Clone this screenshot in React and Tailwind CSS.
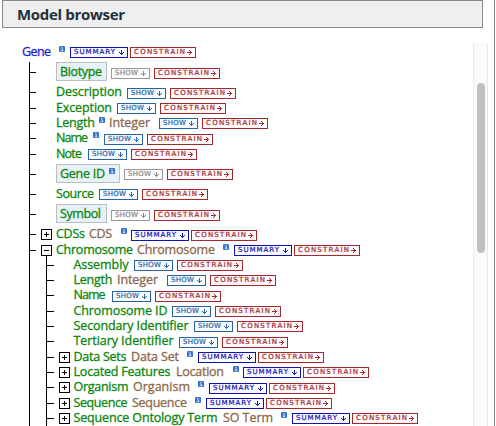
import React, { useLayoutEffect, useRef } from "react";

// Label whose tracking is adjusted so that it fills the given width.
function Fit({ w, className, children }) {
  const ref = useRef(null);
  useLayoutEffect(() => {
    const el = ref.current;
    el.style.letterSpacing = "0px";
    const natural = el.getBoundingClientRect().width;
    el.style.letterSpacing = (w - natural) / Math.max(1, children.length - 1) + "px";
  }, [w, children]);
  return (
    <span className={"block shrink-0 " + className} style={{ width: w }}>
      <span ref={ref} className="inline-block whitespace-pre">{children}</span>
    </span>
  );
}

function Arrow({ down }) {
  return (
    <svg width="5" height="5" viewBox="0 0 5 5" shapeRendering="crispEdges" fill="currentColor" className="shrink-0">
      {down ? (
        <path d="M2 0h1v5h-1zM0 2h1v1h-1zM1 3h1v1h-1zM3 3h1v1h-1zM4 2h1v1h-1z" />
      ) : (
        <path d="M0 2h5v1h-5zM2 0h1v1h-1zM3 1h1v1h-1zM3 3h1v1h-1zM2 4h1v1h-1z" />
      )}
    </svg>
  );
}

const pixel = "h-[9px] leading-[9px] text-[7px] font-['DejaVu_Sans'] -mt-[2px] [-webkit-text-stroke:0.2px]";
const kinds = {
  show: { box: "w-[39px] border-[#2864a4] text-[#2864a4] bg-[#f9fdff]", text: "SHOW", w: 23 },
  off: { box: "w-[39px] border-[#999] text-[#888] bg-[#fdfdfd]", text: "SHOW", w: 23 },
  summary: { box: "w-[58px] border-[#1212b4] text-[#1212b4] bg-[#fafbff]", text: "SUMMARY", w: 41 },
  constrain: { box: "w-[66px] border-[#9c2a2f] text-[#9c2a2f] bg-[#fff9f9]", text: "CONSTRAIN", w: 51 },
};

function Button({ kind, ml }) {
  const k = kinds[kind];
  return (
    <button
      className={"mt-[6px] flex h-[11px] shrink-0 items-start justify-between border pt-[2px] pr-[3px] pl-[3px] " + k.box}
      style={{ marginLeft: ml }}
    >
      <Fit w={k.w} className={pixel}>{k.text}</Fit>
      <Arrow down={kind !== "constrain"} />
    </button>
  );
}

function Info({ ml }) {
  return (
    <svg width="6" height="6" viewBox="0 0 6 6" className="mt-[5px] shrink-0" style={{ marginLeft: ml }}>
      <rect width="6" height="6" rx="1" fill="#3873cb" />
      <path d="M2.2 1.4h1.4M2 2.9h1.5v2M1.8 4.8h2.6" stroke="#e4efff" strokeWidth="0.8" fill="none" />
    </svg>
  );
}

function Toggle({ open }) {
  return (
    <svg width="11" height="11" viewBox="0 0 11 11" shapeRendering="crispEdges" className="shrink-0">
      <path d="M.5 .5h10v10h-10z" fill="#fff" stroke="#000" />
      <path d={open ? "M3 5h5v1h-5z" : "M3 5h5v1h-5zM5 3h1v5h-1z"} />
    </svg>
  );
}

// top: button top; tick: branch y; label and type as [text, width]; info and act: left edges
const rows = [
  { top: 47, tick: 52, d: 0, label: ["Gene", 29], info: 59, kind: "summary", act: 70 },
  { top: 68, tick: 72, d: 1, label: ["Biotype", 42], box: 51, kind: "off", act: 111 },
  { top: 88, tick: 92, d: 1, label: ["Description", 66], kind: "show", act: 127 },
  { top: 103, tick: 108, d: 1, label: ["Exception", 56], kind: "show", act: 117 },
  { top: 118, tick: 123, d: 1, label: ["Length", 39], info: 99, type: ["Integer", 41, 109], kind: "show", act: 159 },
  { top: 134, tick: 138, d: 1, label: ["Name", 32], info: 93, kind: "show", act: 104 },
  { top: 149, tick: 154, d: 1, label: ["Note", 26], kind: "show", act: 88 },
  { top: 169, tick: 174, d: 1, label: ["Gene ID", 45], info: 109, box: 64, kind: "off", act: 124 },
  { top: 189, tick: 194, d: 1, label: ["Source", 38], kind: "show", act: 99 },
  { top: 210, tick: 214, d: 1, label: ["Symbol", 41], box: 51, kind: "off", act: 111 },
  { top: 230, tick: 234, d: 1, toggle: "plus", label: ["CDSs", 29], type: ["CDS", 23, 89], info: 121, kind: "summary", act: 131 },
  { top: 245, tick: 250, d: 1, toggle: "minus", label: ["Chromosome", 77], type: ["Chromosome", 78, 137], info: 223, kind: "summary", act: 234 },
  { top: 260, tick: 265, d: 2, first: true, label: ["Assembly", 55], kind: "show", act: 134 },
  { top: 275, tick: 280, d: 2, label: ["Length", 39], type: ["Integer", 41, 117], kind: "show", act: 167 },
  { top: 291, tick: 295, d: 2, label: ["Name", 32], kind: "show", act: 112 },
  { top: 306, tick: 311, d: 2, label: ["Chromosome ID", 94], kind: "show", act: 172 },
  { top: 321, tick: 326, d: 2, label: ["Secondary Identifier", 115], kind: "show", act: 194 },
  { top: 337, tick: 341, d: 2, label: ["Tertiary Identifier", 100], kind: "show", act: 179 },
  { top: 352, tick: 357, d: 2, toggle: "plus", label: ["Data Sets", 53], type: ["Data Set", 48, 131], info: 187, kind: "summary", act: 198 },
  { top: 367, tick: 372, d: 2, toggle: "plus", label: ["Located Features", 97], type: ["Location", 48, 176], info: 233, kind: "summary", act: 243 },
  { top: 383, tick: 387, d: 2, toggle: "plus", label: ["Organism", 55], type: ["Organism", 57, 133], info: 198, kind: "summary", act: 209 },
  { top: 398, tick: 403, d: 2, toggle: "plus", label: ["Sequence", 54], type: ["Sequence", 55, 132], info: 195, kind: "summary", act: 206 },
  { top: 413, tick: 418, d: 2, toggle: "plus", label: ["Sequence Ontology Term", 144], type: ["SO Term", 50, 223], info: 281, kind: "summary", act: 292 },
];

function Gutter({ row }) {
  const mt = row.tick - row.top + 6;
  if (row.d === 0) return <div className="w-[22px] shrink-0" />;
  return (
    <div className={"flex shrink-0 items-stretch pl-[29px] " + (row.d === 1 ? "w-[56px]" : "w-[73.5px]")}>
      <div className={"shrink-0 border-l border-black " + (row.d === 1 ? "w-[7px]" : "w-[17px]")}>
        {row.d === 1 && <div className="h-px bg-black" style={{ marginTop: mt }} />}
      </div>
      {row.d === 1 && row.toggle && (
        <div className="pl-[5px]" style={{ paddingTop: mt - 5 }}>
          <Toggle open={row.toggle === "minus"} />
        </div>
      )}
      {row.d === 2 && (
        <div className={"w-[8px] shrink-0 border-l border-black " + (row.first ? "mt-[2px]" : "")}>
          <div className="h-px bg-black" style={{ marginTop: row.first ? mt - 2 : mt }} />
        </div>
      )}
      {row.d === 2 && row.toggle && (
        <div className="pl-[5px]" style={{ paddingTop: mt - 5 }}>
          <Toggle />
        </div>
      )}
    </div>
  );
}

const font = "font-['Open_Sans',sans-serif] text-[12.5px] font-medium leading-[14px] mt-[4px] h-[14px] [-webkit-text-stroke:0.3px] ";

function Row({ row, height }) {
  const start = row.d === 0 ? 22 : row.d === 1 ? 56 : 73.5;
  const raised = row.tick - row.top === 4;
  const label = <Fit w={row.label[1]} className={font + (row.d === 0 ? "text-[#1c1ce0]" : "text-[#0c860c]")}>{row.label[0]}</Fit>;
  let x = start + row.label[1];
  const items = [];
  if (row.box) {
    items.push(
      <div
        key="l"
        className="mt-px flex h-[19px] shrink-0 items-start border border-[#b9bfc4] bg-[#e7f2f8] pl-[3px]"
        style={{ width: row.box }}
      >
        <div className="-mt-[2px] flex">
          {label}
          {row.info && <Info ml={row.info - 60 - row.label[1]} />}
        </div>
      </div>
    );
    x = start + row.box;
  } else {
    items.push(<React.Fragment key="l">{label}</React.Fragment>);
    const extras = [];
    if (row.info) extras.push({ at: row.info, w: 6, el: (ml) => <Info key="i" ml={ml} /> });
    if (row.type)
      extras.push({
        at: row.type[2],
        w: row.type[1],
        el: (ml) => (
          <div key="t" className="shrink-0" style={{ marginLeft: ml }}>
            <Fit w={row.type[1]} className={font + "text-[#8c6849]"}>{row.type[0]}</Fit>
          </div>
        ),
      });
    extras.sort((a, b) => a.at - b.at);
    extras.forEach((e) => {
      items.push(e.el(e.at - x));
      x = e.at + e.w;
    });
  }
  return (
    <li className="flex items-stretch" style={{ height }}>
      <Gutter row={row} />
      <div className="flex items-start">
        <div className={"flex shrink-0 items-start " + (raised ? "-mt-px" : "")}>{items}</div>
        <Button kind={row.kind} ml={row.act - x} />
        <Button kind="constrain" ml={row.kind === "summary" ? 2 : 4} />
      </div>
    </li>
  );
}

export default function App() {
  return (
    <main className="flex h-[426px] w-[496px] overflow-hidden bg-white">
      <section className="flex h-full w-[495px] shrink-0 flex-col border-r border-[#888]">
        <header className="ml-[2px] flex h-[28px] w-[481px] shrink-0 items-center border border-[#888] bg-[#efefef] pl-[14px]">
          <h1>
            <Fit w={108} className="font-['Open_Sans',sans-serif] text-[15px] font-bold leading-[20px] text-[#1f303a]">Model browser</Fit>
          </h1>
        </header>
        <div className="flex min-h-0 flex-1">
          <ul className="w-[471px] shrink-0 pt-[13px]">
            {rows.map((row, i) => (
              <Row key={i} row={row} height={(rows[i + 1] ? rows[i + 1].top : 432) - row.top} />
            ))}
          </ul>
          <div className="mt-[15px] ml-[2px] w-[15px] shrink-0 border-x border-[#e8e8e8] bg-[#fafafa] pt-[40px] pl-[3px]">
            <div className="h-[170px] w-[8px] rounded-full bg-[#c1c1c1]" />
          </div>
        </div>
      </section>
    </main>
  );
}
